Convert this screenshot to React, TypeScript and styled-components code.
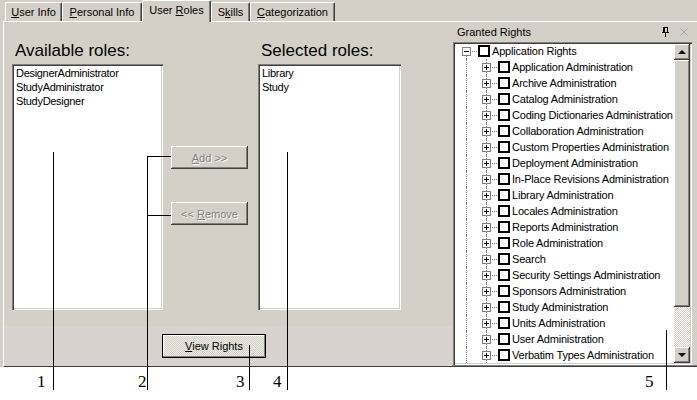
import styled, { createGlobalStyle } from 'styled-components';

const GlobalStyle = createGlobalStyle`
  html, body {
    margin: 0;
    padding: 0;
    background: #fff;
  }
  body {
    font-family: 'Liberation Sans', Arial, sans-serif;
    font-size: 11px;
    color: #000;
  }
`;

const FACE = '#d4d0c8';
const raised = `box-shadow: inset -1px -1px #404040, inset 1px 1px #fff, inset -2px -2px #808080, inset 2px 2px ${FACE};`;
const sunken = `box-shadow: inset 1px 1px #808080, inset 2px 2px #404040, inset -1px -1px #fff, inset -2px -2px ${FACE};`;

const Page = styled.div`
  position: relative;
  width: 697px;
  height: 400px;
  overflow: hidden;
  background: #fff;
`;

const Window = styled.div`
  height: 367px;
  background: ${FACE};
  display: flex;
  flex-direction: column;
`;

const TabStrip = styled.div`
  height: 21px;
  display: flex;
  align-items: flex-end;
  padding-left: 5px;
`;

const Tab = styled.div<{ $w: number; $active?: boolean }>`
  position: relative;
  z-index: ${(p) => (p.$active ? 1 : 0)};
  box-sizing: border-box;
  width: ${(p) => p.$w}px;
  height: ${(p) => (p.$active ? 22 : 19)}px;
  margin-bottom: ${(p) => (p.$active ? -1 : 0)}px;
  padding-bottom: ${(p) => (p.$active ? 3 : 0)}px;
  background: ${FACE};
  border-top: 1px solid #fff;
  border-left: 1px solid #fff;
  border-right: 1px solid #404040;
  border-radius: 2px 2px 0 0;
  box-shadow: inset -1px 0 #808080;
  display: flex;
  align-items: center;
  justify-content: center;
  white-space: nowrap;
`;

const TabPanel = styled.div`
  flex: 1;
  display: flex;
  margin-left: 3px;
  border-top: 1px solid #fff;
  border-left: 1px solid #fff;
  border-bottom: 1px solid #404040;
  box-shadow: inset 0 -1px #808080;
`;

const RolesArea = styled.div`
  flex: none;
  width: 448px;
  display: flex;
  flex-direction: column;
`;

const RolesGrid = styled.div`
  display: flex;
  padding: 19px 0 0 8px;
`;

const RoleColumn = styled.div<{ $w: number }>`
  width: ${(p) => p.$w}px;
  display: flex;
  flex-direction: column;
`;

const Heading = styled.div`
  height: 20px;
  line-height: 20px;
  margin-bottom: 3px;
  padding-left: 3px;
  font-size: 17px;
  white-space: nowrap;
`;

const ListBox = styled.div`
  height: 246px;
  box-sizing: border-box;
  padding: 2px 4px;
  background: #fff;
  ${sunken}
`;

const ListItem = styled.div`
  height: 14px;
  line-height: 14px;
  letter-spacing: -0.3px;
  white-space: nowrap;
`;

const ButtonColumn = styled.div`
  width: 77px;
  margin: 0 10px 0 8px;
  padding-top: 105px;
  display: flex;
  flex-direction: column;
  gap: 33px;
`;

const PushButton = styled.button`
  width: 77px;
  height: 23px;
  border: none;
  padding: 0;
  background: ${FACE};
  font-family: inherit;
  font-size: 11px;
  color: #808080;
  text-shadow: 1px 1px #fff;
  ${raised}
`;

const Footer = styled.div`
  margin-top: auto;
  height: 40px;
  box-sizing: border-box;
  padding: 8px 0 0 158px;
  background: repeating-conic-gradient(#dcd3d2 0 25%, #d6d0cc 0 50%) 0 0 / 2px 2px;
`;

const DefaultButton = styled.button`
  width: 104px;
  height: 24px;
  padding: 0;
  border: 1px solid #000;
  font-family: inherit;
  font-size: 11px;
  color: #000;
  background: repeating-conic-gradient(#eeebe6 0 25%, ${FACE} 0 50%) 0 0 / 2px 2px;
  box-shadow: inset -1px -1px #808080, inset 1px 1px #fff;
`;

const GrantedPanel = styled.div`
  flex: 1;
  min-width: 0;
  display: flex;
  flex-direction: column;
`;

const PanelHeader = styled.div`
  height: 20px;
  display: flex;
  align-items: center;
  padding: 0 9px 0 5px;
`;

const PanelTitle = styled.span`
  flex: 1;
`;

const HeaderIcons = styled.div`
  display: flex;
  align-items: center;
  gap: 11px;
`;

const TreeBox = styled.div`
  flex: 1;
  min-height: 0;
  margin: 0 5px 1px 1px;
  box-sizing: border-box;
  padding: 2px;
  display: flex;
  background: #fff;
  ${sunken}
`;

const TreeList = styled.div`
  flex: 1;
  min-width: 0;
  margin-top: -1px;
  overflow: hidden;
`;

const TreeRow = styled.div<{ $level: number }>`
  position: relative;
  height: 16px;
  display: flex;
  align-items: center;
  padding-left: ${(p) => 7 + p.$level * 20}px;
  letter-spacing: -0.2px;
  white-space: nowrap;

  &::before {
    content: '';
    position: absolute;
    left: 11px;
    top: ${(p) => (p.$level === 0 ? 12 : 0)}px;
    bottom: 0;
    border-left: 1px dotted #808080;
  }

  &::after {
    content: '';
    display: ${(p) => (p.$level === 0 ? 'none' : 'block')};
    position: absolute;
    left: 31px;
    top: 0;
    bottom: 0;
    border-left: 1px dotted #808080;
  }
`;

const Expander = styled.span<{ $open?: boolean }>`
  position: relative;
  z-index: 1;
  flex: none;
  width: 9px;
  height: 9px;
  box-sizing: border-box;
  border: 1px solid #808080;
  background: #fff;

  &::before {
    content: '';
    position: absolute;
    left: 1px;
    top: 3px;
    width: 5px;
    height: 1px;
    background: #000;
  }

  &::after {
    content: '';
    display: ${(p) => (p.$open ? 'none' : 'block')};
    position: absolute;
    left: 3px;
    top: 1px;
    width: 1px;
    height: 5px;
    background: #000;
  }
`;

const Connector = styled.span`
  flex: none;
  width: 5px;
  margin: 0 1px;
  border-top: 1px dotted #808080;
`;

const CheckBox = styled.span`
  flex: none;
  width: 12px;
  height: 12px;
  box-sizing: border-box;
  border: 2px solid #000;
  background: #fff;
  margin-right: 2px;
`;

const ScrollBar = styled.div`
  flex: none;
  width: 16px;
  display: flex;
  flex-direction: column;
`;

const ScrollArrow = styled.div<{ $down?: boolean }>`
  height: 16px;
  background: ${FACE};
  display: flex;
  align-items: center;
  justify-content: center;
  ${raised}

  &::before {
    content: '';
    border-left: 4px solid transparent;
    border-right: 4px solid transparent;
    ${(p) => (p.$down ? 'border-top: 4px solid #000;' : 'border-bottom: 4px solid #000;')}
  }
`;

const Thumb = styled.div`
  height: 247px;
  background: ${FACE};
  ${raised}
`;

const Track = styled.div`
  flex: 1;
  background: repeating-conic-gradient(#fff 0 25%, ${FACE} 0 50%) 0 0 / 2px 2px;
`;

const Callouts = styled.div`
  position: absolute;
  inset: 0;
  pointer-events: none;
`;

const Leader = styled.div<{ $x: number; $top: number }>`
  position: absolute;
  left: ${(p) => p.$x}px;
  top: ${(p) => p.$top}px;
  bottom: 10px;
  width: 1px;
  background: #000;
`;

const Tick = styled.div<{ $x: number; $y: number; $w: number }>`
  position: absolute;
  left: ${(p) => p.$x}px;
  top: ${(p) => p.$y}px;
  width: ${(p) => p.$w}px;
  height: 1px;
  background: #000;
`;

const CalloutNumber = styled.span<{ $x: number }>`
  position: absolute;
  left: ${(p) => p.$x}px;
  top: 372px;
  font-family: 'Liberation Serif', 'Times New Roman', serif;
  font-size: 17px;
  line-height: 20px;
`;

const rights = [
  'Application Administration',
  'Archive Administration',
  'Catalog Administration',
  'Coding Dictionaries Administration',
  'Collaboration Administration',
  'Custom Properties Administration',
  'Deployment Administration',
  'In-Place Revisions Administration',
  'Library Administration',
  'Locales Administration',
  'Reports Administration',
  'Role Administration',
  'Search',
  'Security Settings Administration',
  'Sponsors Administration',
  'Study Administration',
  'Units Administration',
  'User Administration',
  'Verbatim Types Administration',
];

const callouts = [
  { n: '1', x: 53, top: 152, label: 37 },
  { n: '2', x: 147, top: 156, label: 138 },
  { n: '3', x: 249, top: 345, label: 236 },
  { n: '4', x: 287, top: 152, label: 273 },
  { n: '5', x: 666, top: 330, label: 645 },
];

const PinIcon = () => (
  <svg width="7" height="10" viewBox="0 0 7 10">
    <rect x="1" y="0" width="5" height="1" fill="#000" />
    <rect x="1" y="0" width="2" height="6" fill="#000" />
    <rect x="5" y="0" width="1" height="6" fill="#000" />
    <rect x="0" y="5" width="7" height="1" fill="#000" />
    <rect x="3" y="6" width="1" height="4" fill="#000" />
  </svg>
);

const CloseIcon = () => (
  <svg width="8" height="8" viewBox="0 0 8 8">
    <path d="M0.5 0.5L7.5 7.5M7.5 0.5L0.5 7.5" stroke="#a8a8a8" strokeWidth="1" />
  </svg>
);

export default function App() {
  return (
    <Page>
      <GlobalStyle />
      <Window>
        <TabStrip>
          <Tab $w={57}>
            <span><u>U</u>ser Info</span>
          </Tab>
          <Tab $w={80}>
            <span><u>P</u>ersonal Info</span>
          </Tab>
          <Tab $w={69} $active>
            <span>User <u>R</u>oles</span>
          </Tab>
          <Tab $w={39}>
            <span>S<u>k</u>ills</span>
          </Tab>
          <Tab $w={85}>
            <span><u>C</u>ategorization</span>
          </Tab>
        </TabStrip>

        <TabPanel>
          <RolesArea>
            <RolesGrid>
              <RoleColumn $w={151}>
                <Heading>Available roles:</Heading>
                <ListBox>
                  <ListItem>DesignerAdministrator</ListItem>
                  <ListItem>StudyAdministrator</ListItem>
                  <ListItem>StudyDesigner</ListItem>
                </ListBox>
              </RoleColumn>
              <ButtonColumn>
                <PushButton disabled>
                  <u>A</u>dd &gt;&gt;
                </PushButton>
                <PushButton disabled>
                  &lt;&lt; <u>R</u>emove
                </PushButton>
              </ButtonColumn>
              <RoleColumn $w={143}>
                <Heading>Selected roles:</Heading>
                <ListBox>
                  <ListItem>Library</ListItem>
                  <ListItem>Study</ListItem>
                </ListBox>
              </RoleColumn>
            </RolesGrid>
            <Footer>
              <DefaultButton>
                <u>V</u>iew Rights
              </DefaultButton>
            </Footer>
          </RolesArea>

          <GrantedPanel>
            <PanelHeader>
              <PanelTitle>Granted Rights</PanelTitle>
              <HeaderIcons>
                <PinIcon />
                <CloseIcon />
              </HeaderIcons>
            </PanelHeader>
            <TreeBox>
              <TreeList>
                <TreeRow $level={0}>
                  <Expander $open />
                  <Connector />
                  <CheckBox />
                  Application Rights
                </TreeRow>
                {rights.map((r) => (
                  <TreeRow key={r} $level={1}>
                    <Expander />
                    <Connector />
                    <CheckBox />
                    {r}
                  </TreeRow>
                ))}
              </TreeList>
              <ScrollBar>
                <ScrollArrow />
                <Thumb />
                <Track />
                <ScrollArrow $down />
              </ScrollBar>
            </TreeBox>
          </GrantedPanel>
        </TabPanel>
      </Window>

      <Callouts>
        {callouts.map((c) => (
          <Leader key={c.n} $x={c.x} $top={c.top} />
        ))}
        <Tick $x={147} $y={156} $w={24} />
        <Tick $x={147} $y={215} $w={24} />
        {callouts.map((c) => (
          <CalloutNumber key={c.n} $x={c.label}>
            {c.n}
          </CalloutNumber>
        ))}
      </Callouts>
    </Page>
  );
}
